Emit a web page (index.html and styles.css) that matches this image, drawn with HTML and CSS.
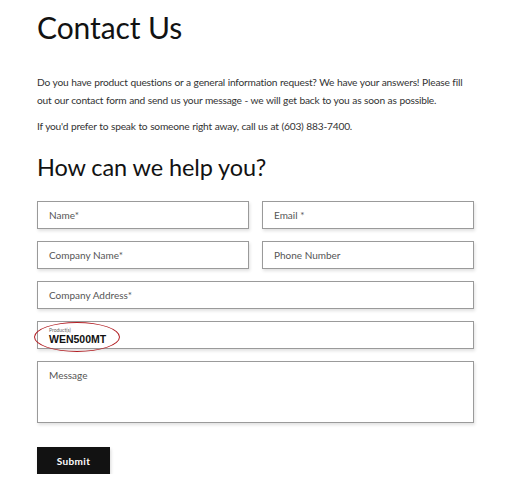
FILE: index.html
```html
<!DOCTYPE html>
<html>
<head>
<meta charset="utf-8">
<link rel="stylesheet" href="styles.css">
</head>
<body>
<main class="page">
  <h1 class="title">Contact Us</h1>
  <p class="intro">Do you have product questions or a general information request? We have your answers! Please fill out our contact form and send us your message - we will get back to you as soon as possible.</p>
  <p class="intro">If you'd prefer to speak to someone right away, call us at (603) 883-7400.</p>
  <h2 class="subtitle">How can we help you?</h2>
  <form class="form">
    <div class="row two">
      <div class="field"><span class="placeholder">Name*</span></div>
      <div class="field"><span class="placeholder">Email *</span></div>
    </div>
    <div class="row two">
      <div class="field"><span class="placeholder">Company Name*</span></div>
      <div class="field"><span class="placeholder">Phone Number</span></div>
    </div>
    <div class="field"><span class="placeholder">Company Address*</span></div>
    <div class="field filled">
      <span class="mini">Product(s)</span>
      <span class="value">WEN500MT</span>
      <span class="circle"></span>
    </div>
    <div class="field area"><span class="placeholder">Message</span></div>
    <button type="button" class="submit">Submit</button>
  </form>
</main>
</body>
</html>
```

FILE: styles.css
```css
* { box-sizing: border-box; }
html, body { margin: 0; background: #fff; }
body { font-family: "Lato", "Open Sans", sans-serif; color: #121212; }
.page { width: 437px; margin-left: 37px; padding-top: 7px; }
.title { font-weight: 400; font-size: 30px; line-height: 40px; margin: 0 0 26px; letter-spacing: -0.1px; }
.intro { font-size: 10.2px; line-height: 18px; color: #333; margin: 0 0 8px; letter-spacing: -0.2px; word-spacing: 0.3px; }
.subtitle { font-weight: 400; font-size: 23.5px; line-height: 32px; margin: 16px 0 18px; letter-spacing: -0.1px; }
.form { display: flex; flex-direction: column; gap: 12px; }
.row.two { display: grid; grid-template-columns: 1fr 1fr; gap: 13px; }
.field { position: relative; height: 28px; border: 1px solid #9a9a9a; background: #fff; box-shadow: 1px 2px 3px rgba(0,0,0,0.12); display: flex; align-items: center; padding-left: 11px; }
.placeholder { font-size: 10px; color: #555; letter-spacing: 0; }
.field.filled { flex-direction: column; align-items: flex-start; justify-content: center; gap: 0; }
.mini { font-size: 5px; line-height: 6px; color: #666; margin-top: 1px; }
.value { font-family: "Liberation Sans", Arial, sans-serif; font-weight: 700; font-size: 10.5px; line-height: 12px; color: #111; }
.circle { position: absolute; left: -4px; top: 0; width: 86px; height: 30px; border: 1.5px solid #b21f24; border-radius: 50%; }
.field.area { height: 62px; align-items: flex-start; padding-top: 7px; }
.submit { margin-top: 12px; width: 73px; height: 27px; background: #121212; color: #fff; border: none; font-family: "Lato", sans-serif; font-weight: 700; font-size: 10px; letter-spacing: 0.4px; box-shadow: 1px 2px 3px rgba(0,0,0,0.15); }
```
